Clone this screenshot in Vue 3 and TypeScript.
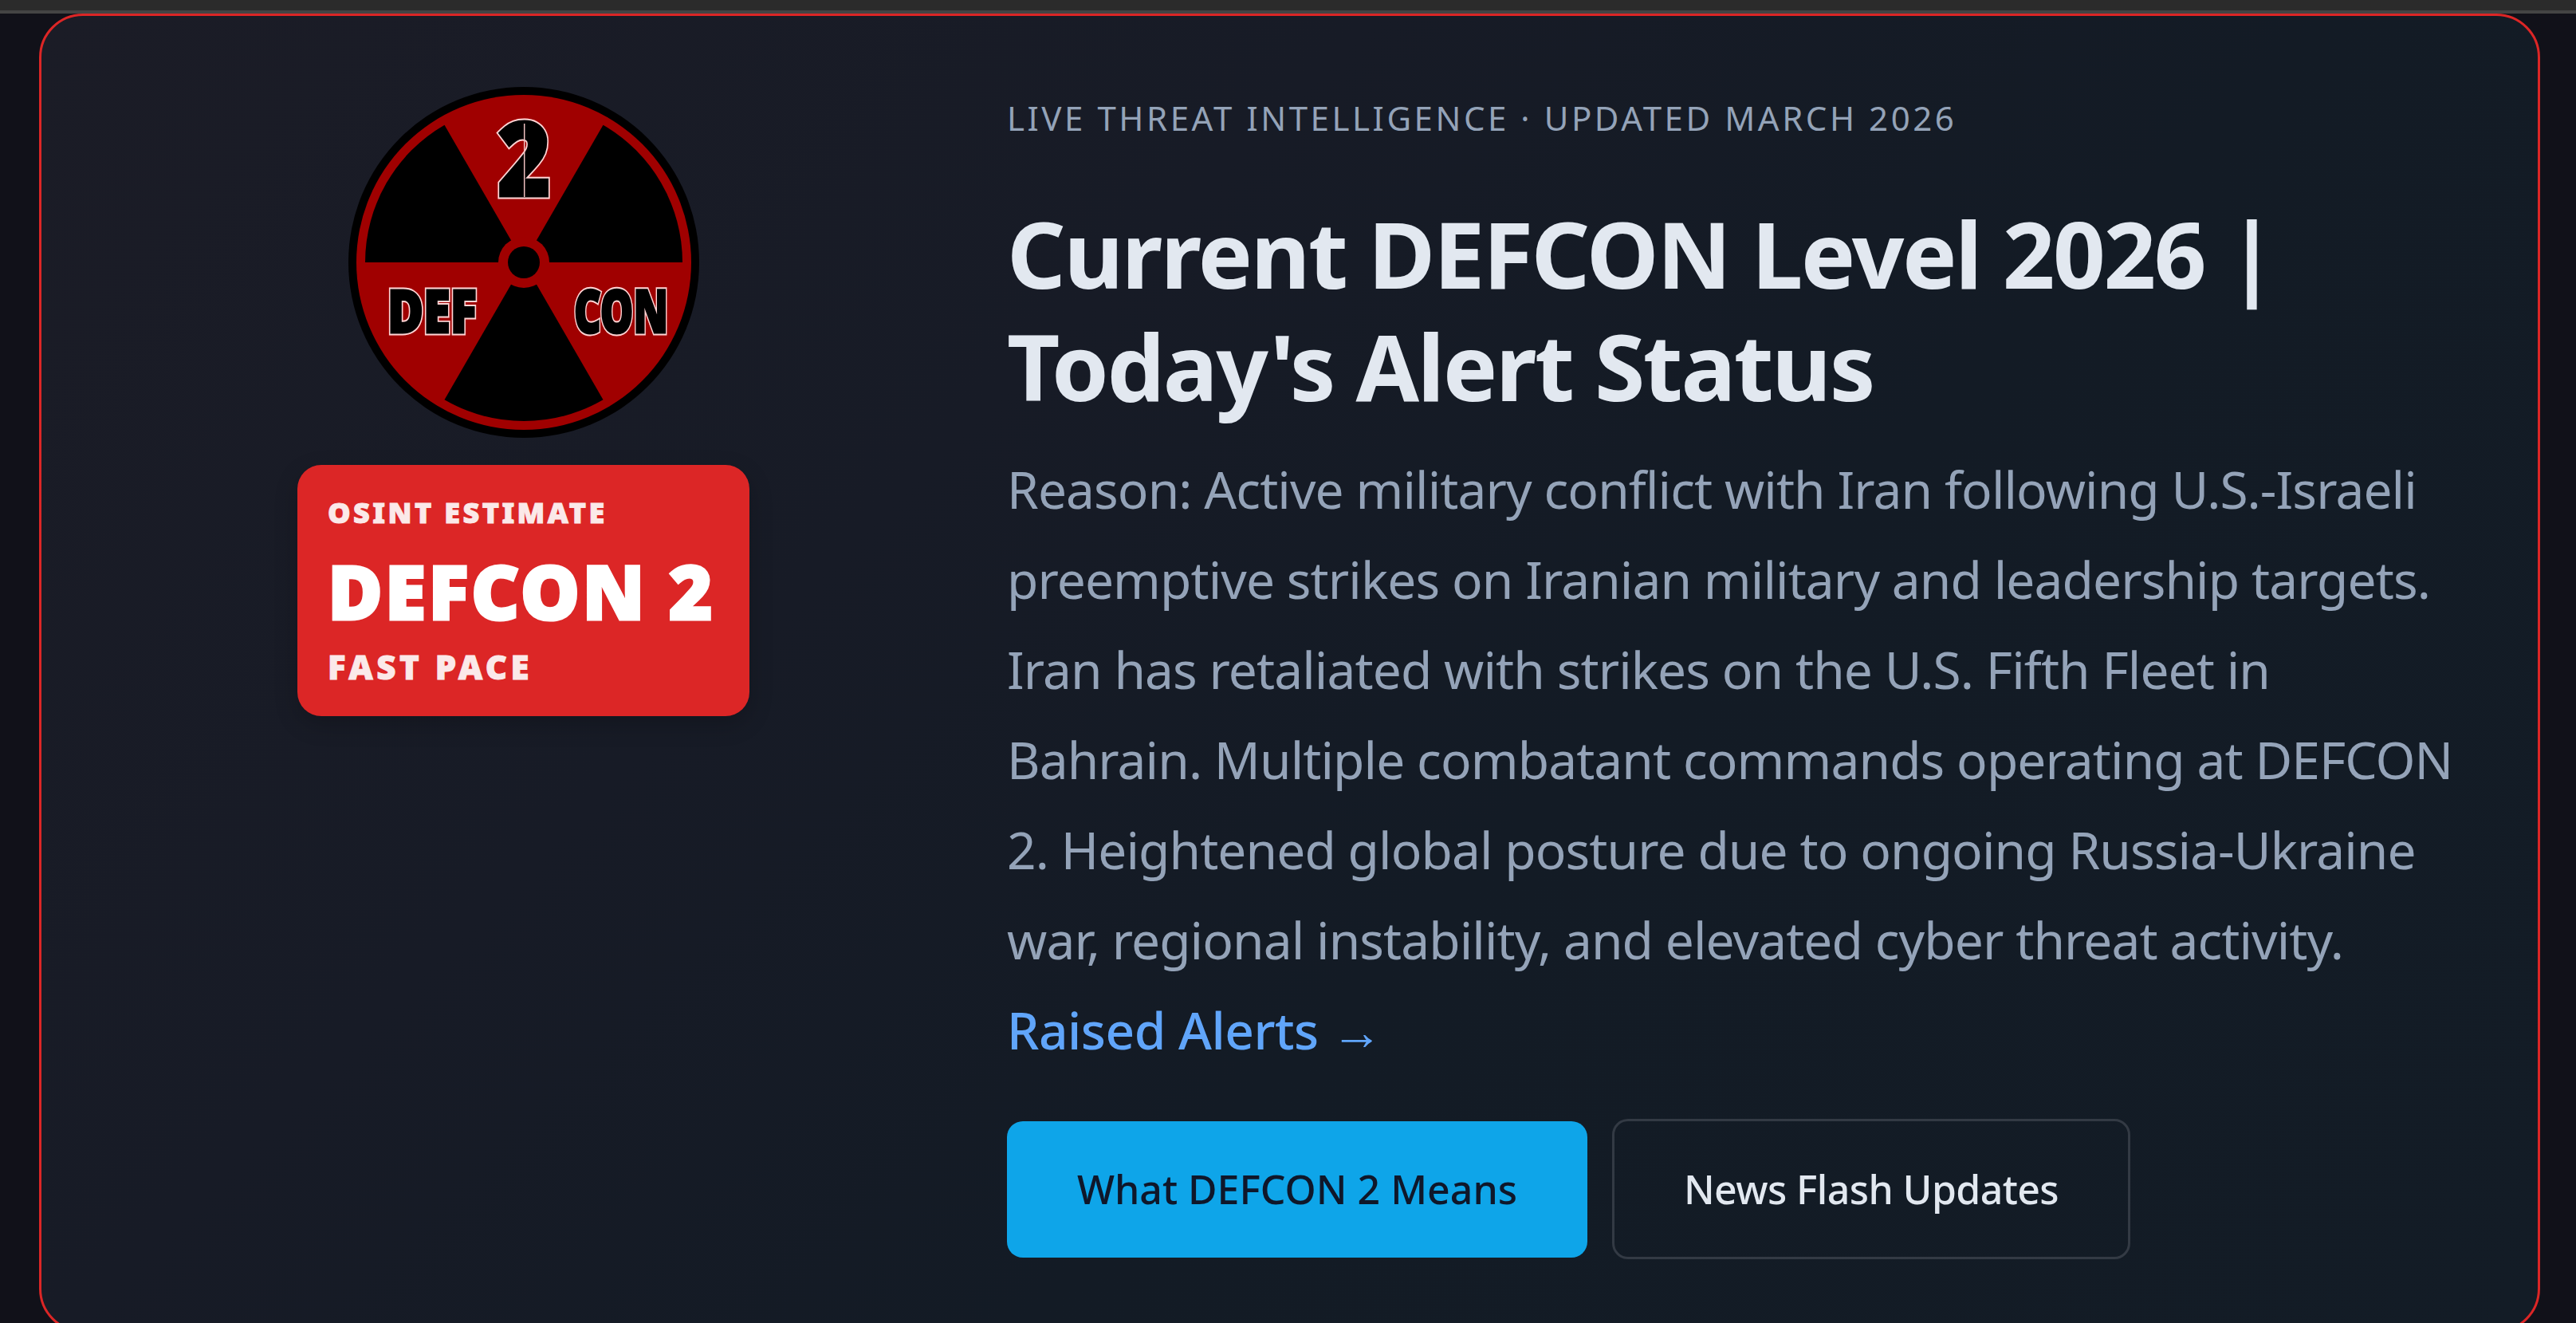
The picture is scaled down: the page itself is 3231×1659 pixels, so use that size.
<script setup lang="ts">
const paragraph =
  "Reason: Active military conflict with Iran following U.S.-Israeli preemptive strikes on Iranian military and leadership targets. Iran has retaliated with strikes on the U.S. Fifth Fleet in Bahrain. Multiple combatant commands operating at DEFCON 2. Heightened global posture due to ongoing Russia-Ukraine war, regional instability, and elevated cyber threat activity.";
const blades = [180, 300, 60].map((start) => {
  const r = 199;
  const a1 = (start * Math.PI) / 180;
  const a2 = ((start + 60) * Math.PI) / 180;
  const p = (rad: number, a: number) => `${(220 + rad * Math.cos(a)).toFixed(1)} ${(220 + rad * Math.sin(a)).toFixed(1)}`;
  return `M220 220 L${p(r, a1)} A${r} ${r} 0 0 1 ${p(r, a2)} Z`;
});
const marks = [
  { label: "2", x: 187, y: 137, size: 105, len: 67 },
  { label: "DEF", x: 49, y: 308, size: 60, len: 112 },
  { label: "CON", x: 283, y: 308, size: 60, len: 118 },
];
</script>

<template>
  <div class="page">
    <div class="topbar"></div>
    <section class="card">
      <aside class="side">
        <svg class="logo" viewBox="0 0 440 440" width="440" height="440" role="img" aria-label="DEFCON 2">
          <circle cx="220" cy="220" r="220" fill="#000" />
          <circle cx="220" cy="220" r="210" fill="#a00000" />
          <path v-for="(d, i) in blades" :key="i" :d="d" fill="#000" />
          <circle cx="220" cy="220" r="32" fill="#a00000" />
          <circle cx="220" cy="220" r="20" fill="#000" />
          <g v-for="m in marks" :key="m.label" :transform="`translate(${m.x} ${m.y}) scale(1 1.23)`">
            <text class="mark-edge" :font-size="m.size" :textLength="m.len" lengthAdjust="spacingAndGlyphs">{{ m.label }}</text>
            <text class="mark" :font-size="m.size" :textLength="m.len" lengthAdjust="spacingAndGlyphs">{{ m.label }}</text>
          </g>
          <line x1="220.7" y1="46" x2="220.7" y2="138" stroke="#f0c0c0" stroke-width="1.5" />
        </svg>
        <div class="badge">
          <div class="badge-small">OSINT ESTIMATE</div>
          <div class="badge-big">DEFCON 2</div>
          <div class="badge-pace">FAST PACE</div>
        </div>
      </aside>
      <div class="main">
        <div class="eyebrow">LIVE THREAT INTELLIGENCE · UPDATED MARCH 2026</div>
        <h1>Current DEFCON Level 2026 | Today's Alert Status</h1>
        <p class="reason">{{ paragraph }} <a href="#" class="raised">Raised Alerts →</a></p>
        <div class="actions">
          <a href="#" class="btn primary">What DEFCON 2 Means</a>
          <a href="#" class="btn secondary">News Flash Updates</a>
        </div>
      </div>
    </section>
  </div>
</template>

<style>
html, body { margin: 0; background: #111119; overflow: hidden; }
</style>

<style scoped>
.page {
  height: 1659px;
  overflow: hidden;
  font-family: "Noto Sans", "Open Sans", sans-serif;
}
.topbar {
  height: 13px;
  background: #2b2b2b;
  border-bottom: 4px solid #444;
}
.card {
  box-sizing: border-box;
  margin: 0 45px 0 49px;
  height: 1654px;
  border: 3px solid #dc2626;
  border-radius: 55px;
  background: linear-gradient(135deg, #1b1c26 0%, #171b26 35%, #131b25 60%, #131c26 100%);
  display: flex;
  gap: 2px;
  padding: 89px 90px 0 0;
}
.side {
  width: 1209px;
  flex: none;
  display: flex;
  flex-direction: column;
  align-items: center;
}
.logo { display: block; }
.badge {
  margin-top: 34px;
  width: 567px;
  height: 315px;
  box-sizing: border-box;
  padding: 38px 38px;
  background: #dc2626;
  border-radius: 30px;
  color: #fff;
  font-weight: 900;
  box-shadow: 0 10px 30px rgba(0, 0, 0, 0.2);
}
.badge-small { font-size: 36px; line-height: 44px; letter-spacing: 3.4px; color: #fbe9e9; -webkit-text-stroke: 1px #fbe9e9; }
.badge-big { font-size: 94px; line-height: 112px; margin-top: 20px; letter-spacing: 2.8px; -webkit-text-stroke: 3px #fff; }
.badge-pace { font-size: 42px; line-height: 50px; margin-top: 14px; letter-spacing: 4.5px; color: #fbe9e9; -webkit-text-stroke: 1px #fbe9e9; }
.main { flex: 1; min-width: 0; padding-top: 9px; }
.eyebrow {
  font-size: 42px;
  line-height: 60px;
  letter-spacing: 3.55px;
  color: #94a3b8;
}
h1 {
  margin: 69px 0 28px;
  font-size: 115px;
  line-height: 141px;
  letter-spacing: -2.4px;
  font-weight: 700;
  color: #e2e8f0;
}
.reason {
  margin: 0;
  font-size: 64px;
  line-height: 113px;
  letter-spacing: -0.9px;
  color: #94a3b8;
}
.raised { display: block; color: #60a5fa; text-decoration: none; font-weight: 500; white-space: nowrap; letter-spacing: -0.5px; }
.actions { display: flex; align-items: center; gap: 31px; margin-top: 55px; }
.btn {
  display: flex;
  align-items: center;
  justify-content: center;
  border-radius: 20px;
  font-size: 50px;
  font-weight: 500;
  text-decoration: none;
  box-sizing: border-box;
}
.primary { width: 728px; height: 171px; background: #0ea5e9; color: #0f172a; }
.secondary { width: 650px; height: 176px; border: 3px solid #333a44; color: #e2e8f0; letter-spacing: -0.6px; }
.mark, .mark-edge {
  font-family: "Noto Sans", "DejaVu Sans", sans-serif;
  font-weight: 900;
}
.mark-edge { fill: #000; stroke: #ffd4d4; stroke-width: 5.5; }
.mark { fill: #000; stroke: #000; stroke-width: 2.4; }
</style>
